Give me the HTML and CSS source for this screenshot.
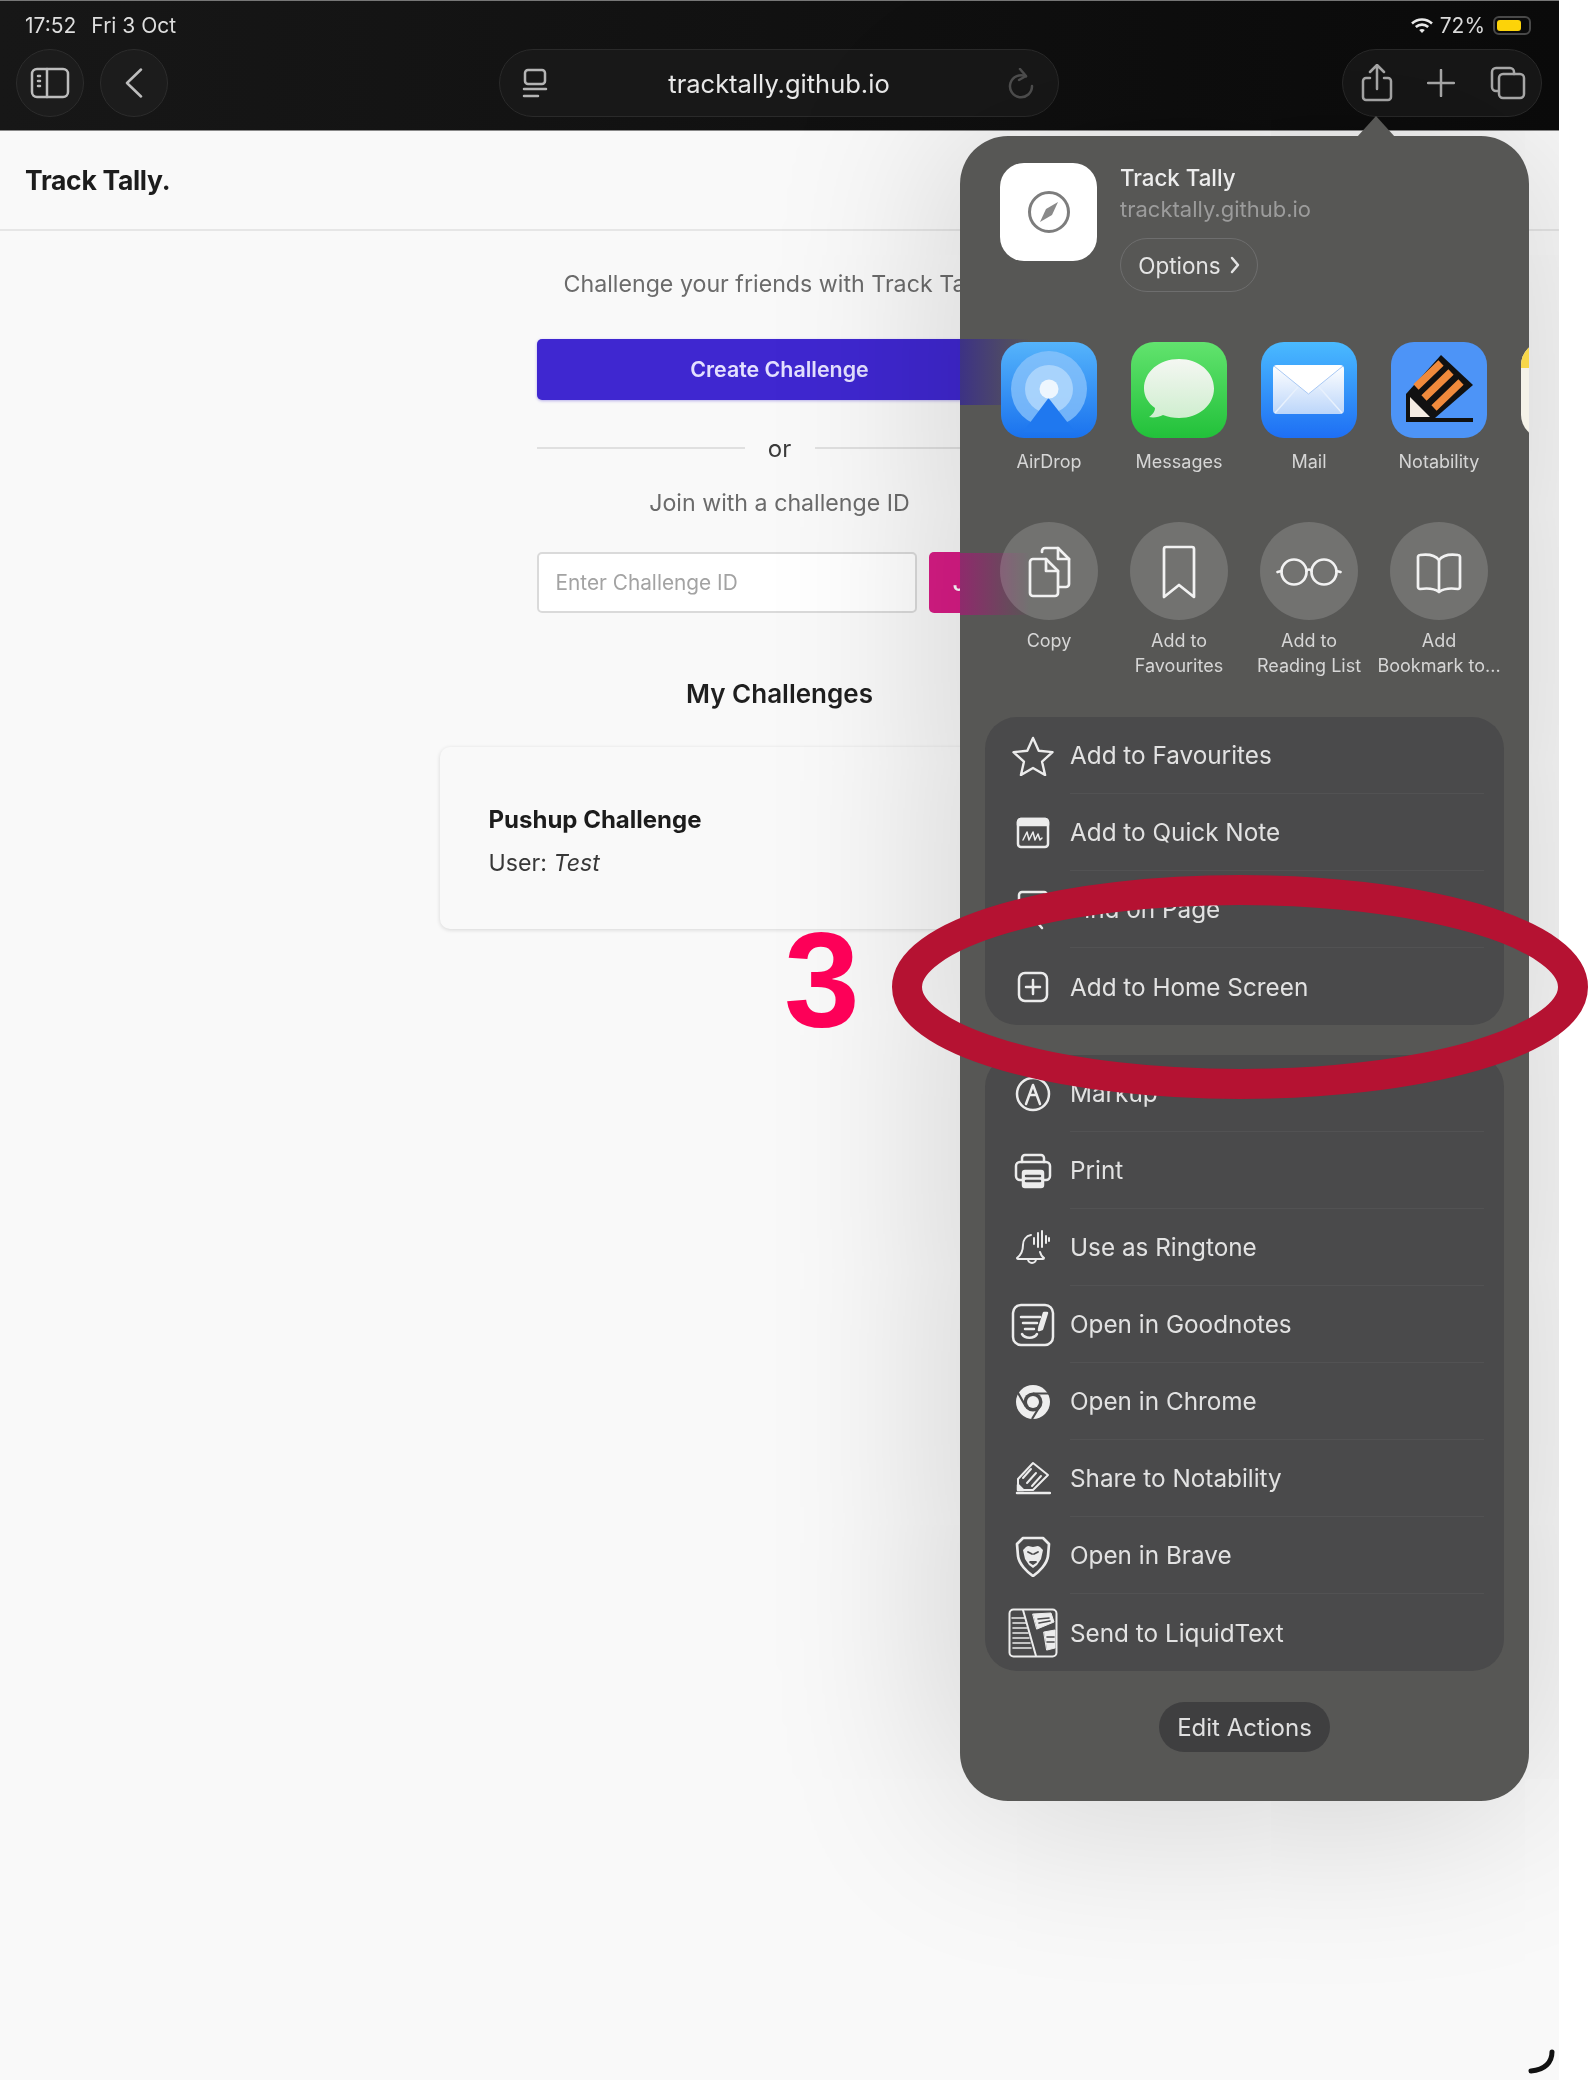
FILE: index.html
```html
<!DOCTYPE html>
<html lang="en">
<head>
<meta charset="utf-8">
<title>Track Tally</title>
<link rel="stylesheet" href="styles.css">
</head>
<body>
<div class="shot">
  <div class="screen">
    <div class="topbar">
      <div class="status">
        <div class="status-left"><span>17:52</span><span>Fri 3 Oct</span></div>
        <div class="status-right">
          <svg class="wifi" viewBox="0 0 22 15" width="22" height="15"><path d="M1 5.5C6.8.2 15.2.2 21 5.5" fill="none" stroke="#eee" stroke-width="2.6"/><path d="M4.8 9C8.4 5.8 13.6 5.8 17.2 9" fill="none" stroke="#eee" stroke-width="2.6"/><path d="M8.2 12C9.8 10.6 12.2 10.6 13.8 12L11 15z" fill="#eee"/></svg>
          <span>72%</span>
          <span class="battery"><span class="battery-fill"></span></span>
        </div>
      </div>
      <div class="toolbar">
        <div class="tool-left">
          <div class="round-btn"><svg class="ic" viewBox="0 0 40 32" width="40" height="32"><rect x="2" y="2" width="36" height="28" rx="5"/><path d="M17 2v28"/><path d="M8 9h2M8 14h2M8 19h2"/></svg></div>
          <div class="round-btn"><svg class="ic" viewBox="0 0 20 30" width="20" height="30"><path d="M17 1.500 3 15l14 13.500"/></svg></div>
        </div>
        <div class="urlbar">
          <svg class="ic reader" viewBox="0 0 26 30" width="26" height="30"><rect x="3" y="2" width="20" height="14" rx="3"/><path d="M2 21h22M2 28h14"/></svg>
          <span class="url">tracktally.github.io</span>
          <svg class="ic reload" viewBox="0 0 26 32" width="26" height="32"><path d="M18 8.500A11 11 0 1 0 24 18"/><path d="M12 1l6 7-7 4"/></svg>
        </div>
        <div class="tool-right">
          <div class="tool-pill">
            <svg class="ic" viewBox="0 0 32 38" width="32" height="38"><path d="M9 14H5a3 3 0 0 0-3 3v16a3 3 0 0 0 3 3h22a3 3 0 0 0 3-3V17a3 3 0 0 0-3-3h-4"/><path d="M16 25V2M9 8l7-7 7 7"/></svg>
            <svg class="ic" viewBox="0 0 28 28" width="28" height="28"><path d="M14 1v26M1 14h26"/></svg>
            <svg class="ic" viewBox="0 0 38 34" width="38" height="34"><path d="M9 25H7a4 4 0 0 1-4-4V6a4 4 0 0 1 4-4h14a4 4 0 0 1 4 4v2"/><rect x="10" y="8" width="25" height="24" rx="4"/></svg>
          </div>
        </div>
      </div>
    </div>

    <header class="page-head"><span class="brand">Track Tally.</span></header>

    <main class="main">
      <p class="muted intro">Challenge your friends with Track Tally.</p>
      <button class="btn-create">Create Challenge</button>
      <div class="divider"><span class="rule"></span><span class="or">or</span><span class="rule"></span></div>
      <p class="muted join-text">Join with a challenge ID</p>
      <div class="join-row">
        <input class="id-input" placeholder="Enter Challenge ID">
        <button class="btn-join">Join</button>
      </div>
      <h2 class="section-title">My Challenges</h2>
      <article class="card">
        <div class="card-title">Pushup Challenge</div>
        <div class="card-user">User: <em>Test</em></div>
      </article>
    </main>

    <div class="sheet">
      <div class="sheet-arrow"></div>
      <div class="bleed bleed-purple"></div>
      <div class="bleed bleed-pink"></div>

      <div class="sheet-head">
        <div class="tile">
          <svg viewBox="0 0 44 44" width="44" height="44"><circle cx="22" cy="22" r="19.500" fill="none" stroke="#7d7d7d" stroke-width="3"/><path d="M31 12 25 25 13 32 19 19z" fill="#8a8a8a"/></svg>
        </div>
        <div class="head-text">
          <div class="head-title">Track Tally</div>
          <div class="head-url">tracktally.github.io</div>
          <div class="options">Options<svg class="ic" viewBox="0 0 10 18" width="10" height="18"><path d="M2 2l6 7-6 7"/></svg></div>
        </div>
      </div>

      <div class="apps">
        <div class="cell">
          <svg class="app-icon" viewBox="0 0 96 96"><defs><linearGradient id="gAir" x1="0" y1="0" x2="0" y2="1"><stop offset="0" stop-color="#55b4fb"/><stop offset="1" stop-color="#1a72ee"/></linearGradient><clipPath id="cAir"><rect width="96" height="96" rx="23"/></clipPath></defs><rect width="96" height="96" rx="23" fill="url(#gAir)"/><circle cx="48" cy="47" r="38" fill="#8cc4fb" fill-opacity=".75"/><circle cx="48" cy="47" r="24" fill="#b4d9fc" fill-opacity=".8"/><path d="M47.500 56 22 90h52z" fill="#1f78ef" clip-path="url(#cAir)"/><circle cx="48" cy="47" r="9.500" fill="#eef6fe"/></svg>
          <div class="label">AirDrop</div>
        </div>
        <div class="cell">
          <svg class="app-icon" viewBox="0 0 96 96"><defs><linearGradient id="gMsg" x1="0" y1="0" x2="0" y2="1"><stop offset="0" stop-color="#62e36e"/><stop offset="1" stop-color="#22c13a"/></linearGradient><linearGradient id="gBub" x1="0" y1="0" x2="0" y2="1"><stop offset="0" stop-color="#f4f7f2"/><stop offset="1" stop-color="#cfeecf"/></linearGradient></defs><rect width="96" height="96" rx="23" fill="url(#gMsg)"/><path d="M48 17c20 0 35 13 35 29.500S68 76 48 76c-6 0-11-1-16-3-4 2-9 3-14 2 3-2 6-5 6-9-7-5-11-12-11-19.500C13 30 28 17 48 17z" fill="url(#gBub)"/></svg>
          <div class="label">Messages</div>
        </div>
        <div class="cell">
          <svg class="app-icon" viewBox="0 0 96 96"><defs><linearGradient id="gMail" x1="0" y1="0" x2="0" y2="1"><stop offset="0" stop-color="#4abaff"/><stop offset="1" stop-color="#1e6ff4"/></linearGradient><linearGradient id="gEnv" x1="0" y1="0" x2="0" y2="1"><stop offset="0" stop-color="#ffffff"/><stop offset="1" stop-color="#bcd6fa"/></linearGradient></defs><rect width="96" height="96" rx="23" fill="url(#gMail)"/><rect x="12" y="23" width="71" height="49" rx="4" fill="url(#gEnv)"/><path d="M13 24 47.500 52 82 24" fill="#fff" stroke="#a9c9f5" stroke-width="1"/><path d="M14 71l23-26M81 71 58 45" stroke="#e8f1fd" stroke-width="1.500" fill="none"/></svg>
          <div class="label">Mail</div>
        </div>
        <div class="cell">
          <svg class="app-icon" viewBox="0 0 96 96"><rect width="96" height="96" rx="23" fill="#4d94f7"/><path d="M50 13 82 43 44 76 15 79V52z" fill="#111"/><path d="M19 55v20h20z" fill="#f5ece2"/><path d="M50 21 25 45M60 30 33 56M70 40 43 66" stroke="#f08a3c" stroke-width="7.500" fill="none"/><path d="M15 78h67" stroke="#111" stroke-width="4"/></svg>
          <div class="label">Notability</div>
        </div>
        <div class="cell">
          <svg class="app-icon" viewBox="0 0 96 96"><rect width="96" height="96" rx="23" fill="#f4f2e8"/><path d="M0 23A23 23 0 0 1 23 0h50a23 23 0 0 1 23 23v3H0z" fill="#f7d749"/></svg>
        </div>
      </div>

      <div class="actions">
        <div class="cell">
          <div class="circle"><svg class="ic thin" viewBox="0 0 98 98" width="98" height="98"><path d="M42 30v-1a3 3 0 0 1 3-3h13l11 11v25a3 3 0 0 1-3 3h-7"/><path d="M58 26v11h11"/><path d="M33 37h13l12 12v22a3 3 0 0 1-3 3H33a3 3 0 0 1-3-3V40a3 3 0 0 1 3-3z"/><path d="M46 37v12h12"/></svg></div>
          <div class="label">Copy</div>
        </div>
        <div class="cell">
          <div class="circle"><svg class="ic thin" viewBox="0 0 98 98" width="98" height="98"><path d="M36 25h26a2 2 0 0 1 2 2v48L49 63 34 75V27a2 2 0 0 1 2-2z"/></svg></div>
          <div class="label">Add to<br>Favourites</div>
        </div>
        <div class="cell">
          <div class="circle"><svg class="ic thin" viewBox="0 0 98 98" width="98" height="98"><circle cx="34" cy="50" r="12.500"/><circle cx="64" cy="50" r="12.500"/><path d="M46.500 49c1-2 4-2 5 0M21.500 49l-4 1M76.500 49l4 1"/></svg></div>
          <div class="label">Add to<br>Reading List</div>
        </div>
        <div class="cell">
          <div class="circle"><svg class="ic thin" viewBox="0 0 98 98" width="98" height="98"><path d="M49 38c-4-5-12-6-19-5-1 0-2 1-2 2v30c0 1 1 2 2 2 7-1 15 0 19 3 4-3 12-4 19-3 1 0 2-1 2-2V35c0-1-1-2-2-2-7-1-15 0-19 5z"/><path d="M49 38v30"/></svg></div>
          <div class="label">Add<br>Bookmark to...</div>
        </div>
      </div>

      <div class="group group-first">
        <div class="row"><span class="slot"><svg class="ic" viewBox="0 0 44 42" width="42" height="40"><path d="M22 2l6 13.500 14.500 1.500-11 10 3.200 14L22 33.500 9.300 41l3.200-14-11-10L16 15.500z"/></svg></span><span class="row-body">Add to Favourites</span></div>
        <div class="row"><span class="slot"><svg class="ic" viewBox="0 0 34 32" width="34" height="32"><rect x="2" y="2" width="30" height="28" rx="3"/><path d="M2 8V5a3 3 0 0 1 3-3h24a3 3 0 0 1 3 3v3z" fill="currentColor"/><path class="fine" d="M7 23l4-8 2 8 4-8 2 8 3-6 2 6 2-2"/></svg></span><span class="row-body">Add to Quick Note</span></div>
        <div class="row"><span class="slot"><svg class="ic" viewBox="0 0 34 40" width="34" height="40"><rect x="3" y="2" width="28" height="28" rx="3"/><circle cx="14" cy="24" r="6" /><path d="M18.500 29 26 38"/></svg></span><span class="row-body">Find on Page</span></div>
        <div class="row"><span class="slot"><svg class="ic" viewBox="0 0 32 32" width="32" height="32"><rect x="2" y="2" width="28" height="28" rx="6"/><path d="M16 9v14M9 16h14"/></svg></span><span class="row-body">Add to Home Screen</span></div>
      </div>

      <div class="group">
        <div class="row"><span class="slot"><svg class="ic" viewBox="0 0 36 36" width="36" height="36"><circle cx="18" cy="18" r="16"/><path d="M11 28 18 9l7 19M14.500 19h7"/></svg></span><span class="row-body">Markup</span></div>
        <div class="row"><span class="slot"><svg class="ic" viewBox="0 0 38 36" width="38" height="36"><path d="M8 9V5a3 3 0 0 1 3-3h16a3 3 0 0 1 3 3v4"/><path d="M8 27H6a4 4 0 0 1-4-4V13a4 4 0 0 1 4-4h26a4 4 0 0 1 4 4v10a4 4 0 0 1-4 4h-2"/><rect x="9" y="18" width="20" height="16" rx="2" fill="currentColor"/><path d="M12 23h14M12 28h14" stroke="#4a4a4b"/></svg></span><span class="row-body">Print</span></div>
        <div class="row"><span class="slot"><svg class="ic" viewBox="0 0 36 36" width="36" height="36"><path class="thin2" d="M16 5c-5 1-8 5-8 10 0 6-2 10-6 13 0 1 1 1 2 1h24c1 0 1-1 1-1-2-1-3-3-4-6"/><path class="thin2" d="M13 29a4 4 0 0 0 8 0"/><path class="thin2" d="M19 8v6M23 3v14M27 1v16M31 6v7M34 8v3"/></svg></span><span class="row-body">Use as Ringtone</span></div>
        <div class="row"><span class="slot"><svg class="ic" viewBox="0 0 44 44" width="44" height="44"><rect x="2" y="2" width="40" height="40" rx="8"/><path d="M10 14h19M12 20h14M14 26h9" /><path d="M36 10l-5 16-3 1 .5-3L33 10z" fill="currentColor"/><path d="M11 31c3 5 12 5 15 0"/></svg></span><span class="row-body">Open in Goodnotes</span></div>
        <div class="row"><span class="slot"><svg viewBox="0 0 36 36" width="36" height="36"><circle cx="18" cy="18" r="17" fill="#eee"/><circle cx="18" cy="18" r="9.500" fill="#4a4a4b"/><circle cx="18" cy="18" r="6" fill="#eee"/><path d="M18 9.500h16M10.500 22 2.500 8M25 22l-8 13" stroke="#4a4a4b" stroke-width="2.200" fill="none"/></svg></span><span class="row-body">Open in Chrome</span></div>
        <div class="row"><span class="slot"><svg class="ic" viewBox="0 0 36 36" width="36" height="36"><path d="M18 2 33 14 18 29 3 29V18z" stroke-width="2"/><path d="M16 8 8 17M21 12 12 22M26 15 17 25" stroke-width="2"/><path d="M3 24l5 5H3z" fill="currentColor"/><path d="M2 32h33" stroke-width="2.500"/></svg></span><span class="row-body">Share to Notability</span></div>
        <div class="row"><span class="slot"><svg class="ic thin" viewBox="0 0 36 42" width="36" height="42"><path d="M8 3h20l6 6-1 12c-1 8-9 16-15 20C12 37 4 29 3 21L2 9z"/><path d="M11 12c3-2 4 0 7 0s4-2 7 0l3 3-2 9-4 6-4 3-4-3-4-6-2-9z" fill="currentColor" stroke="none"/><path d="M13 17l4 2M23 17l-4 2M15 27h6l-3 2z" stroke="#4a4a4b" stroke-width="1.800"/></svg></span><span class="row-body">Open in Brave</span></div>
        <div class="row"><span class="slot"><svg class="ic" viewBox="0 0 50 50" width="50" height="50"><rect x="1.500" y="1.500" width="47" height="47" rx="4" stroke-width="2"/><path d="M15 2l13 46" stroke-width="2"/><path d="M4 10h13M5 15h13M5 20h14M5 25h15M5 30h16M5 35h17M5 40h18" stroke-width="1.600"/><path d="M25 6l18-1 3 9-17 7z" fill="currentColor" stroke-width="1"/><path d="M36 24l11-2v18l-8 2z" fill="currentColor" stroke-width="1"/><path d="M30 11l11-1M31 15l11-2M39 29h7M39 34h7" stroke="#4a4a4b" stroke-width="1.600"/></svg></span><span class="row-body">Send to LiquidText</span></div>
      </div>

      <div class="edit-wrap"><div class="edit">Edit Actions</div></div>
    </div>

    <svg class="spinner" viewBox="0 0 30 30" width="30" height="30"><path d="M26 4c0 10-7 18-21 19" fill="none" stroke="#111" stroke-width="5" stroke-linecap="round"/></svg>
  </div>

  <svg class="ring" viewBox="0 0 1588 2080" width="1588" height="2080"><ellipse cx="1240" cy="987" rx="333" ry="97" fill="none" stroke="#b51232" stroke-width="30"/></svg>
  <div class="step">3</div>
</div>
</body>
</html>
```

FILE: styles.css
```css
* { box-sizing: border-box; }
html, body { margin: 0; padding: 0; background: #fff; }
body { font-family: Inter, "Noto Sans", "Liberation Sans", sans-serif; }

.shot { position: relative; width: 1588px; height: 2080px; overflow: hidden; }
.screen { position: relative; width: 1559px; height: 2080px; overflow: hidden; background: #f9f9f9; filter: blur(.5px); }

/* browser chrome */
.topbar { height: 131px; background: linear-gradient(90deg, #171717, #0b0b0b); border-top: 1px solid #777; border-bottom: 1px solid #888; color: #e8e8e8; }
.status { height: 48px; padding: 0 28px 0 25px; display: flex; align-items: center; justify-content: space-between; font-size: 21px; color: #dedede; }
.status-left { display: flex; gap: 15px; }
.status-right { display: flex; align-items: center; gap: 7px; }
.battery { position: relative; display: block; width: 38px; height: 19px; border: 2px solid #4a4a4a; border-radius: 6px; padding: 2px; margin-left: 1px; }
.battery-fill { display: block; width: 24px; height: 100%; background: #ffd60a; border-radius: 3px; }
.toolbar { display: grid; grid-template-columns: 499px 560px 1fr; height: 68px; }
.tool-left { display: flex; gap: 16px; padding-left: 16px; }
.round-btn { width: 68px; height: 68px; border-radius: 50%; background: #1c1c1c; border: 1px solid #2c2c2c; display: flex; align-items: center; justify-content: center; color: #bdbdbd; }
.urlbar { position: relative; display: flex; align-items: center; justify-content: center; border-radius: 34px; background: #181818; border: 1px solid #2a2a2a; }
.url { font-size: 25.500px; color: #e8e8e8; }
.reader { position: absolute; left: 22px; top: 18px; color: #b4b4b4; }
.reload { position: absolute; right: 24px; top: 18px; color: #4f4f4f; }
.tool-right { display: flex; justify-content: flex-end; padding-right: 17px; }
.tool-pill { width: 200px; height: 68px; border-radius: 34px; background: #171717; border: 1px solid #2a2a2a; display: flex; align-items: center; justify-content: space-between; padding: 0 14px 0 18px; color: #acacac; }

.ic { fill: none; stroke: currentColor; stroke-width: 2.500; stroke-linecap: round; stroke-linejoin: round; flex: none; }
.ic.thin { stroke-width: 2.700; }
.ic .fine { stroke-width: 1.500; }
.ic .thin2 { stroke-width: 2; }

/* page */
.page-head { height: 100px; padding-left: 25px; display: flex; align-items: center; border-bottom: 2px solid #e6e6e6; }
.brand { font-size: 26.500px; font-weight: 700; color: #1c1c1c; letter-spacing: -.3px; }

.main { display: flex; flex-direction: column; align-items: center; }
.muted { margin: 0; font-size: 23.200px; line-height: 36px; color: #6b6b6b; text-align: center; white-space: nowrap; }
.intro { margin-top: 35px; }
.btn-create { width: 486px; height: 61px; margin-top: 37px; padding-bottom: 2px; border: 0; border-radius: 5px; background: #3f27d0; color: #e4e0ff; font: 600 21.400px Inter, sans-serif; box-shadow: 0 1px 3px rgba(63, 39, 208, .35); }
.divider { width: 486px; height: 36px; margin-top: 30px; display: flex; align-items: center; justify-content: space-between; }
.rule { width: 208px; height: 2px; background: #e0e0e0; }
.or { font-size: 24px; color: #3c3c3c; }
.join-text { margin-top: 19px; }
.join-row { width: 486px; height: 61px; margin-top: 31px; display: flex; gap: 12px; }
.id-input { width: 380px; height: 61px; padding: 0 17px; border: 2px solid #dadada; border-radius: 5px; background: #fff; font: 20.800px Inter, sans-serif; outline: none; }
.id-input::placeholder { color: #a3a3a3; opacity: 1; }
.btn-join { flex: 1; border: 0; border-radius: 5px; background: #d81c85; color: #fff; font: 600 22px Inter, sans-serif; }
.section-title { margin: 61px 0 0; font-size: 26px; line-height: 40px; font-weight: 600; color: #1f1f1f; }
.card { width: 680px; height: 182px; margin-top: 33px; padding: 55px 49px 0; background: #f9f9f9; border-radius: 10px; box-shadow: 0 1px 4px rgba(0, 0, 0, .14); }
.card-title { font-size: 24px; line-height: 36px; font-weight: 700; color: #1c1c1c; }
.card-user { margin-top: 7px; font-size: 23.200px; line-height: 36px; color: #383838; }

/* share sheet */
.sheet { position: absolute; left: 960px; top: 136px; width: 569px; height: 1665px; isolation: isolate; background: #575755; border-radius: 48px; box-shadow: 0 0 190px rgba(0, 0, 0, .2); color: #e2e2e2; padding-top: 27px; }
.sheet-arrow { position: absolute; left: 397px; top: -20px; width: 38px; height: 21px; background: #575755; clip-path: polygon(50% 0, 100% 100%, 0 100%); }
.bleed { position: absolute; left: 0; width: 70px; z-index: -1; }
.bleed-purple { top: 203px; height: 66px; background: linear-gradient(90deg, #3d3285, rgba(61, 50, 133, 0)); }
.bleed-pink { top: 417px; height: 62px; background: linear-gradient(90deg, #8f2a6c, rgba(143, 42, 108, 0)); }

.sheet-head { display: flex; gap: 23px; padding-left: 40px; height: 129px; }
.tile { width: 97px; height: 98px; border-radius: 24px; background: #fff; display: flex; align-items: center; justify-content: center; }
.head-text { display: flex; flex-direction: column; align-items: flex-start; }
.head-title { font-size: 22.300px; line-height: 30px; font-weight: 500; color: #ededed; }
.head-url { margin-top: 1px; font-size: 22px; line-height: 30px; color: #9c9c9c; }
.options { margin-top: 14px; width: 138px; height: 54px; border: 1px solid #6e6e6e; border-radius: 27px; display: flex; align-items: center; justify-content: center; gap: 9px; font-size: 22.500px; color: #e4e4e4; }

.apps, .actions { display: grid; grid-template-columns: repeat(5, 130px); padding-left: 24px; overflow: hidden; }
.apps { width: 569px; margin-top: 50px; height: 132px; }
.actions { margin-top: 48px; height: 158px; }
.cell { display: flex; flex-direction: column; align-items: center; }
.app-icon { display: block; width: 96px; height: 96px; }
.circle { width: 98px; height: 98px; border-radius: 50%; background: rgba(255, 255, 255, .16); color: #f2f2f2; }
.circle svg { display: block; }
.label { margin-top: 12px; font-size: 18px; line-height: 24.500px; color: #d6d6d6; text-align: center; white-space: nowrap; }
.actions .label { margin-top: 9px; }

.group { margin: 30px 25px 0; background: #4a4a4b; border-radius: 32px; }
.group-first { margin-top: 37px; }
.row { display: flex; align-items: stretch; height: 77px; padding-left: 22px; }
.slot { width: 51px; margin-right: 12px; display: flex; align-items: center; justify-content: center; color: #ececec; flex: none; }
.row-body { flex: 1; margin-right: 20px; display: flex; align-items: center; font-size: 24.300px; color: #e2e2e2; border-bottom: 1px solid #525253; }
.row:last-child .row-body { border-bottom: 0; }
.edit-wrap { display: flex; justify-content: center; margin-top: 31px; }
.edit { width: 171px; height: 50px; border-radius: 25px; background: #3f3f40; display: flex; align-items: center; justify-content: center; font-size: 24px; color: #e0e0e0; }

.spinner { position: absolute; left: 1526px; top: 2048px; }

/* annotation */
.ring { position: absolute; left: 0; top: 0; pointer-events: none; }
.step { position: absolute; left: 784px; top: 898px; font: 700 136px/1.2 "Liberation Sans", Arial, sans-serif; color: #fd0058; }
```
